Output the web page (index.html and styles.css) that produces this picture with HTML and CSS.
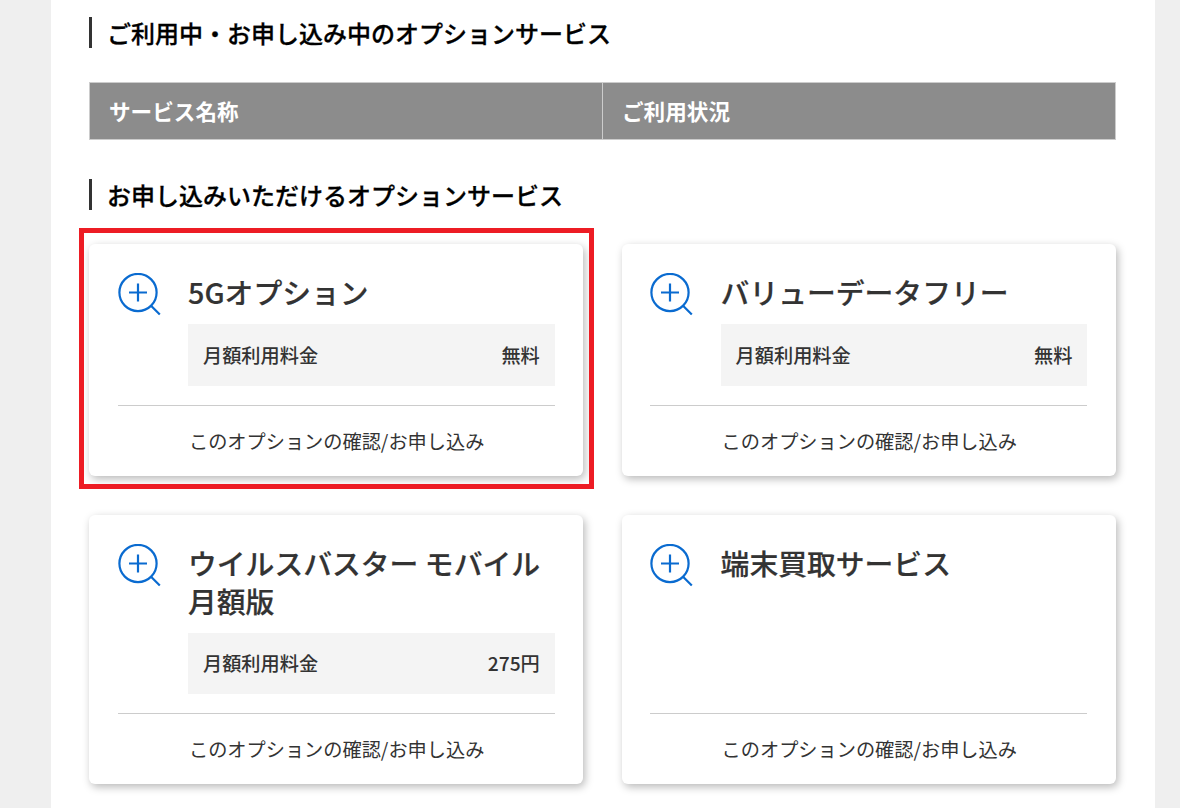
FILE: index.html
```html
<!DOCTYPE html>
<html lang="ja">
<head>
  <meta charset="UTF-8">
  <meta name="viewport" content="width=device-width, initial-scale=1.0">
  <title>オプションサービス</title>
  <link rel="stylesheet" href="styles.css">
</head>
<body>
  <svg class="icon-defs" width="0" height="0" aria-hidden="true">
    <symbol id="zoom-plus" viewBox="0 0 44 44">
      <circle cx="20" cy="19.5" r="18.6" fill="none" stroke="currentColor" stroke-width="2.2"/>
      <path d="M20 10.5v18M11 19.5h18M32.8 32.5l9 9" fill="none" stroke="currentColor" stroke-width="2.2"/>
    </symbol>
  </svg>

  <main class="content">
    <!-- Current options -->
    <h2 class="section-title">ご利用中・お申し込み中のオプションサービス</h2>
    <div class="status-table">
      <div class="status-cell">サービス名称</div>
      <div class="status-cell">ご利用状況</div>
    </div>

    <!-- Available options -->
    <h2 class="section-title">お申し込みいただけるオプションサービス</h2>
    <div class="card-grid">
      <article class="card card-marked">
        <div class="card-body">
          <svg class="card-icon"><use href="#zoom-plus"/></svg>
          <div class="card-main">
            <h3 class="card-title">5Gオプション</h3>
            <div class="fee-row"><span>月額利用料金</span><span>無料</span></div>
          </div>
        </div>
        <div class="card-link">このオプションの確認/お申し込み</div>
      </article>

      <article class="card">
        <div class="card-body">
          <svg class="card-icon"><use href="#zoom-plus"/></svg>
          <div class="card-main">
            <h3 class="card-title">バリューデータフリー</h3>
            <div class="fee-row"><span>月額利用料金</span><span>無料</span></div>
          </div>
        </div>
        <div class="card-link">このオプションの確認/お申し込み</div>
      </article>

      <article class="card">
        <div class="card-body">
          <svg class="card-icon"><use href="#zoom-plus"/></svg>
          <div class="card-main">
            <h3 class="card-title">ウイルスバスター モバイル月額版</h3>
            <div class="fee-row"><span>月額利用料金</span><span>275円</span></div>
          </div>
        </div>
        <div class="card-link">このオプションの確認/お申し込み</div>
      </article>

      <article class="card">
        <div class="card-body">
          <svg class="card-icon"><use href="#zoom-plus"/></svg>
          <div class="card-main">
            <h3 class="card-title">端末買取サービス</h3>
          </div>
        </div>
        <div class="card-link">このオプションの確認/お申し込み</div>
      </article>
    </div>
  </main>
</body>
</html>
```

FILE: styles.css
```css
* {
  margin: 0;
  padding: 0;
  box-sizing: border-box;
}

body {
  background: #efefef;
  font-family: "Noto Sans CJK JP", "Noto Sans", sans-serif;
  color: #333;
  overflow: hidden;
}

.icon-defs {
  position: absolute;
}

.content {
  width: 1104px;
  min-height: 808px;
  margin-left: 51px;
  padding: 17px 39px 24px 38px;
  background: #fff;
}

.section-title {
  height: 31px;
  padding-left: 15px;
  border-left: 3px solid #333;
  font-size: 24px;
  font-weight: 500;
  -webkit-text-stroke: 0.3px #000;
  line-height: 32px;
  color: #000;
}

.status-table {
  display: grid;
  grid-template-columns: 512px 1fr;
  margin: 34px 0 39px;
  border: 1px solid #ccc;
}

.status-cell {
  height: 56px;
  padding-left: 19px;
  background: #8c8c8c;
  color: #fff;
  font-size: 21.6px;
  font-weight: 700;
  line-height: 56px;
}

.status-cell + .status-cell {
  border-left: 1px solid #ccc;
}

.card-grid {
  display: grid;
  grid-template-columns: 1fr 1fr;
  gap: 39px 38.2px;
  margin-top: 34px;
}

.card {
  position: relative;
  display: flex;
  flex-direction: column;
  background: #fff;
  border-radius: 6px;
  box-shadow: 2px 3px 8px rgba(0, 0, 0, 0.28);
}

.card-marked::after {
  content: "";
  position: absolute;
  top: -16px;
  left: -10px;
  right: -11px;
  bottom: -13px;
  border: 5px solid #ed1c24;
}

.card-body {
  flex: 1;
  display: flex;
  margin: 0 28.6px;
  padding: 29px 0 19px;
  border-bottom: 1px solid #ccc;
}

.card-icon {
  flex: none;
  width: 44px;
  height: 44px;
  margin-right: 26.4px;
  color: #0a6bd0;
}

.card-main {
  flex: 1;
}

.card-title {
  margin: 0 0 13.4px;
  font-size: 28.8px;
  font-weight: 500;
  -webkit-text-stroke: 0.2px #333;
  line-height: 37.9px;
}

.fee-row {
  display: flex;
  justify-content: space-between;
  align-items: center;
  height: 61.3px;
  padding: 0 15px;
  background: #f4f4f4;
  font-size: 19.2px;
  font-weight: 500;
}

.card-link {
  height: 70px;
  padding-left: 100px;
  font-size: 19.2px;
  line-height: 70px;
}
```
